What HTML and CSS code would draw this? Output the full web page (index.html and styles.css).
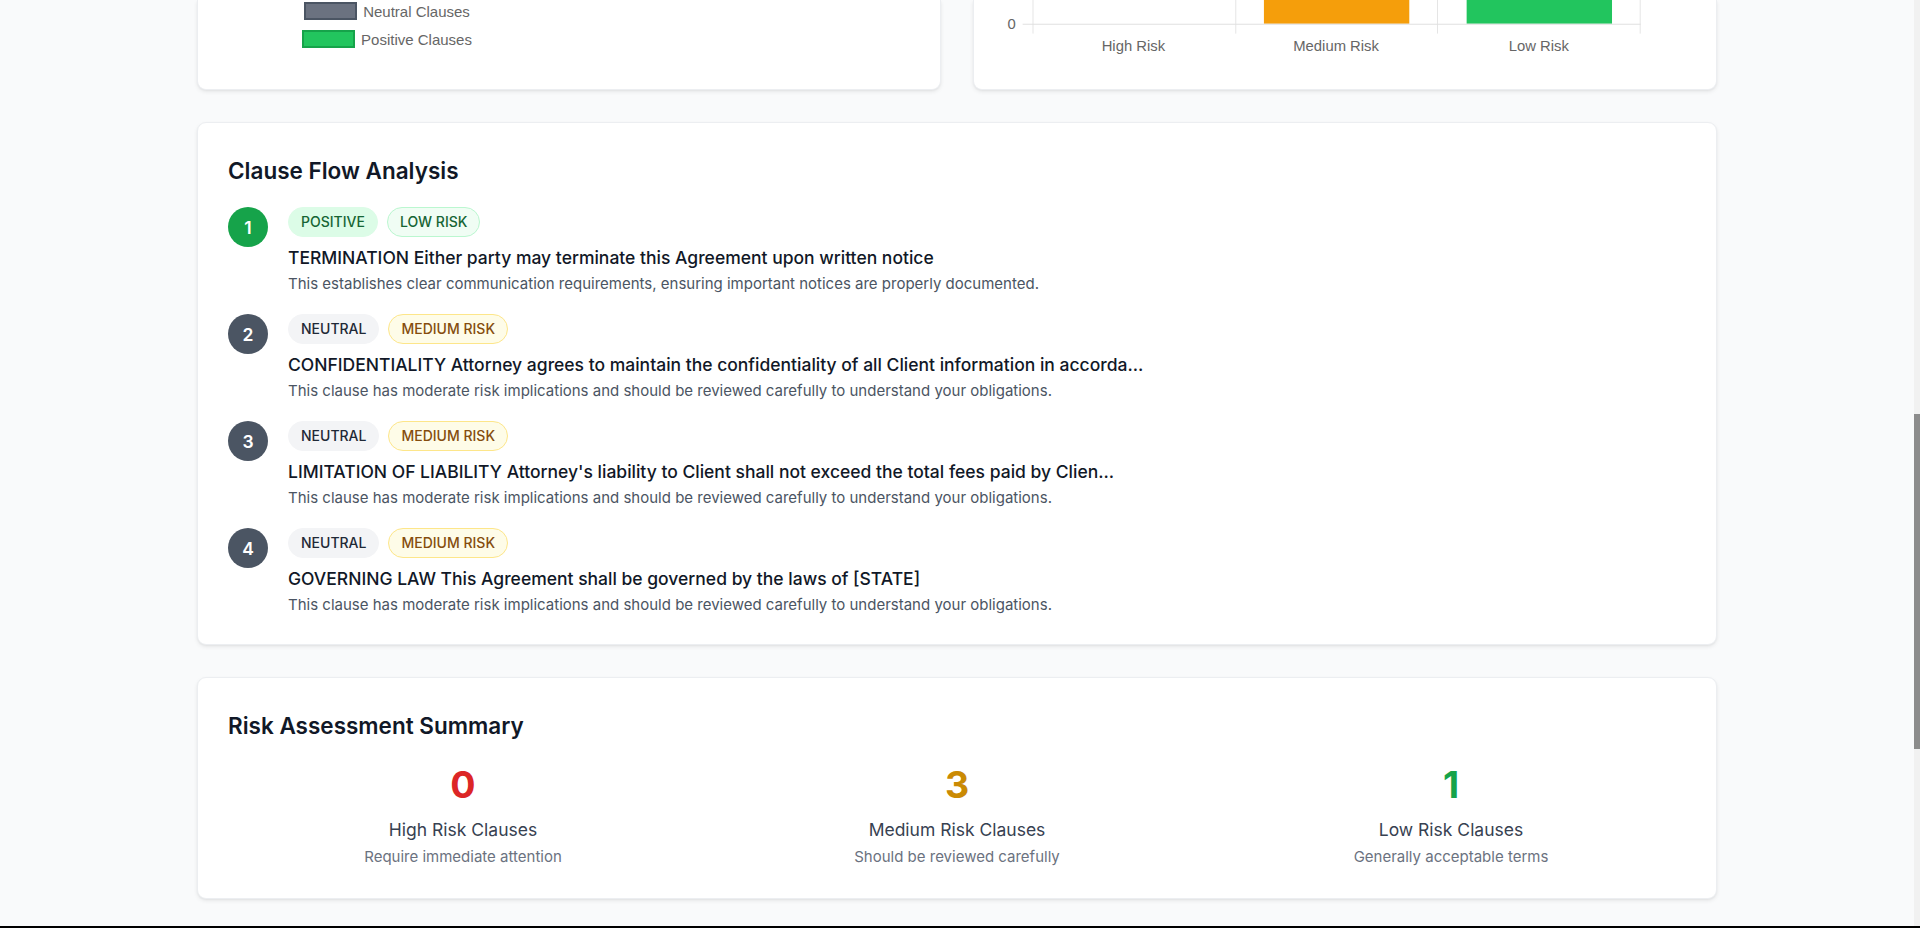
FILE: index.html
```html
<!DOCTYPE html>
<html lang="en">
<head>
<meta charset="utf-8">
<title>Contract Analysis</title>
<link rel="stylesheet" href="styles.css">
</head>
<body>
<div class="screen">
  <main class="page">
    <div class="container">
      <div class="top-row">
        <section class="card card-clipped legend-card">
          <div class="legend">
            <div class="legend-item"><span class="swatch swatch-neutral"></span><span>Neutral Clauses</span></div>
            <div class="legend-item"><span class="swatch swatch-positive"></span><span>Positive Clauses</span></div>
          </div>
        </section>
        <section class="card card-clipped chart-card">
          <svg class="bar-chart" width="744" height="90" viewBox="0 0 744 90">
            <g stroke="#e5e5e5" stroke-width="1">
              <line x1="55.5" y1="0" x2="55.5" y2="34"/>
              <line x1="260.5" y1="0" x2="260.5" y2="34"/>
              <line x1="464.5" y1="0" x2="464.5" y2="34"/>
              <line x1="669.5" y1="0" x2="669.5" y2="34"/>
            </g>
            <rect x="289" y="0" width="147" height="24" fill="#f59e0b"/>
            <rect x="494" y="0" width="147" height="24" fill="#22c55e"/>
            <g stroke="#e0e0e0" stroke-width="1">
              <line x1="45" y1="24.5" x2="670" y2="24.5"/>
            </g>
            <g class="chart-text" fill="#666">
              <text x="38" y="29.5" text-anchor="end">0</text>
              <text x="157" y="52" text-anchor="middle">High Risk</text>
              <text x="362" y="52" text-anchor="middle">Medium Risk</text>
              <text x="567" y="52" text-anchor="middle">Low Risk</text>
            </g>
          </svg>
        </section>
      </div>

      <section class="card flow-card">
        <h2 class="card-title">Clause Flow Analysis</h2>
        <ol class="flow-list">
          <li class="flow-item">
            <span class="step step-positive">1</span>
            <div class="flow-body">
              <div class="badges">
                <span class="badge badge-positive">POSITIVE</span>
                <span class="badge badge-low">LOW RISK</span>
              </div>
              <p class="flow-title">TERMINATION Either party may terminate this Agreement upon written notice</p>
              <p class="flow-desc">This establishes clear communication requirements, ensuring important notices are properly documented.</p>
            </div>
          </li>
          <li class="flow-item">
            <span class="step step-neutral">2</span>
            <div class="flow-body">
              <div class="badges">
                <span class="badge badge-neutral">NEUTRAL</span>
                <span class="badge badge-medium">MEDIUM RISK</span>
              </div>
              <p class="flow-title">CONFIDENTIALITY Attorney agrees to maintain the confidentiality of all Client information in accorda...</p>
              <p class="flow-desc">This clause has moderate risk implications and should be reviewed carefully to understand your obligations.</p>
            </div>
          </li>
          <li class="flow-item">
            <span class="step step-neutral">3</span>
            <div class="flow-body">
              <div class="badges">
                <span class="badge badge-neutral">NEUTRAL</span>
                <span class="badge badge-medium">MEDIUM RISK</span>
              </div>
              <p class="flow-title">LIMITATION OF LIABILITY Attorney's liability to Client shall not exceed the total fees paid by Clien...</p>
              <p class="flow-desc">This clause has moderate risk implications and should be reviewed carefully to understand your obligations.</p>
            </div>
          </li>
          <li class="flow-item">
            <span class="step step-neutral">4</span>
            <div class="flow-body">
              <div class="badges">
                <span class="badge badge-neutral">NEUTRAL</span>
                <span class="badge badge-medium">MEDIUM RISK</span>
              </div>
              <p class="flow-title">GOVERNING LAW This Agreement shall be governed by the laws of [STATE]</p>
              <p class="flow-desc">This clause has moderate risk implications and should be reviewed carefully to understand your obligations.</p>
            </div>
          </li>
        </ol>
      </section>

      <section class="card summary-card">
        <h2 class="card-title">Risk Assessment Summary</h2>
        <div class="stats">
          <div class="stat">
            <div class="stat-value value-high">0</div>
            <div class="stat-label">High Risk Clauses</div>
            <div class="stat-desc">Require immediate attention</div>
          </div>
          <div class="stat">
            <div class="stat-value value-medium">3</div>
            <div class="stat-label">Medium Risk Clauses</div>
            <div class="stat-desc">Should be reviewed carefully</div>
          </div>
          <div class="stat">
            <div class="stat-value value-low">1</div>
            <div class="stat-label">Low Risk Clauses</div>
            <div class="stat-desc">Generally acceptable terms</div>
          </div>
        </div>
      </section>
    </div>
  </main>
  <div class="scrollbar"><div class="scroll-thumb"></div></div>
</div>
<div class="bottom-edge"></div>
</body>
</html>
```

FILE: styles.css
```css
* {
  box-sizing: border-box;
}

html, body {
  margin: 0;
  padding: 0;
}

body {
  height: 928px;
  overflow: hidden;
  display: flex;
  flex-direction: column;
  background: #f9fafb;
  font-family: Inter, "Noto Sans", sans-serif;
  color: #111827;
}

.screen {
  flex: 1;
  display: flex;
  min-height: 0;
}

.page {
  flex: 1;
  min-width: 0;
}

.container {
  width: 1520px;
  margin: 0 auto;
  display: flex;
  flex-direction: column;
  gap: 32px;
}

.card {
  background: #ffffff;
  border: 1px solid #eceef1;
  border-radius: 9px;
  box-shadow: 0 2px 4px rgba(0, 0, 0, 0.07), 0 1px 2px rgba(0, 0, 0, 0.04);
}

/* top row: cards scrolled partially out of view */
.top-row {
  display: grid;
  grid-template-columns: 1fr 1fr;
  gap: 32px;
  height: 90px;
}

.card-clipped {
  border-top: none;
  border-radius: 0 0 9px 9px;
  display: flex;
  flex-direction: column;
  justify-content: flex-end;
  overflow: hidden;
}

.legend-card {
  padding: 0 31px 41px;
}

.legend {
  width: 316px;
  display: flex;
  flex-direction: column;
  align-items: center;
  gap: 10px;
  font-family: "Liberation Sans", Arial, sans-serif;
  font-size: 15px;
  color: #666666;
}

.legend-item {
  display: flex;
  align-items: center;
  gap: 6px;
  height: 18px;
}

.swatch {
  display: block;
  width: 53px;
  height: 18px;
  border: 2px solid;
}

.swatch-neutral {
  background: #6b7280;
  border-color: #4b5563;
}

.swatch-positive {
  background: #22c55e;
  border-color: #16a34a;
}

.chart-card {
  padding: 0;
}

.bar-chart {
  display: block;
}

.chart-text {
  font-family: "Liberation Sans", Arial, sans-serif;
  font-size: 15px;
}

/* shared card title */
.card-title {
  margin: 0 0 19px;
  font-size: 22.5px;
  line-height: 35px;
  font-weight: 600;
  color: #111827;
}

/* flow card */
.flow-card {
  padding: 30px 30px 29px;
}

.flow-list {
  list-style: none;
  margin: 0;
  padding: 0;
  display: flex;
  flex-direction: column;
  gap: 20px;
}

.flow-item {
  display: flex;
  align-items: flex-start;
  gap: 20px;
}

.step {
  flex: none;
  width: 40px;
  height: 40px;
  border-radius: 50%;
  display: flex;
  align-items: center;
  justify-content: center;
  color: #ffffff;
  font-size: 17.5px;
  font-weight: 600;
}

.step-positive {
  background: #16a34a;
}

.step-neutral {
  background: #4b5563;
}

.flow-body {
  flex: 1;
  min-width: 0;
}

.badges {
  display: flex;
  gap: 9px;
}

.badge {
  display: inline-block;
  padding: 4px 12px;
  border: 1px solid transparent;
  border-radius: 9999px;
  font-size: 14px;
  line-height: 20px;
  font-weight: 500;
}

.badge-positive {
  background: #dcfce7;
  border-color: #dcfce7;
  color: #166534;
}

.badge-low {
  background: #f0fdf4;
  border-color: #bbf7d0;
  color: #166534;
}

.badge-neutral {
  background: #f3f4f6;
  border-color: #f3f4f6;
  color: #1f2937;
}

.badge-medium {
  background: #fefce8;
  border-color: #fde68a;
  color: #854d0e;
}

.flow-title {
  margin: 8px 0 0;
  font-size: 17.5px;
  line-height: 25px;
  font-weight: 500;
  color: #111827;
}

.flow-desc {
  margin: 4px 0 0;
  font-size: 15px;
  line-height: 20px;
  color: #4b5563;
}

/* summary card */
.summary-card {
  padding: 30px 30px 31px;
}

.stats {
  display: grid;
  grid-template-columns: repeat(3, 1fr);
  gap: 24px;
  text-align: center;
}

.stat-value {
  font-size: 37.5px;
  line-height: 45px;
  font-weight: 700;
}

.value-high {
  color: #dc2626;
}

.value-medium {
  color: #ca8a04;
}

.value-low {
  color: #16a34a;
}

.stat-label {
  margin-top: 10px;
  font-size: 17.5px;
  line-height: 25px;
  color: #374151;
}

.stat-desc {
  margin-top: 5px;
  font-size: 15px;
  line-height: 20px;
  color: #6b7280;
}

/* window chrome */
.scrollbar {
  flex: none;
  width: 6px;
  background: #f1f1f1;
  padding-top: 414px;
}

.scroll-thumb {
  height: 335px;
  background: #8c8c8c;
}

.bottom-edge {
  flex: none;
  height: 2px;
  background: #000000;
}
```
